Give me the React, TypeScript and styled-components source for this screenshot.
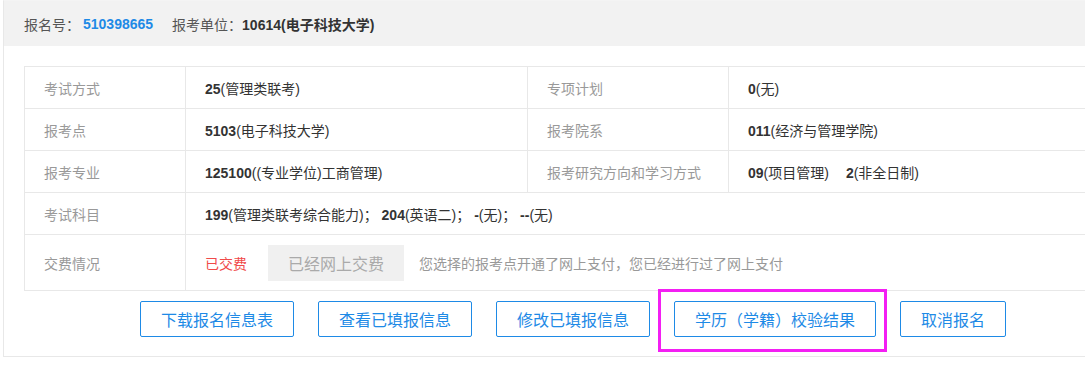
import React from 'react'
import styled, { createGlobalStyle } from 'styled-components'


const actions = [
    { label: '下载报名信息表' },
    { label: '查看已填报信息' },
    { label: '修改已填报信息' },
    { label: '学历（学籍）校验结果', marked: true },
    { label: '取消报名' },
]


export default function App(): JSX.Element {

    const rows: Array<[string, React.ReactNode, string, React.ReactNode]> = [
        ['考试方式', <><b>25</b>(管理类联考)</>, '专项计划', <><b>0</b>(无)</>],
        ['报考点', <><b>5103</b>(电子科技大学)</>, '报考院系', <><b>011</b>(经济与管理学院)</>],
        ['报考专业', <><b>125100</b>((专业学位)工商管理)</>, '报考研究方向和学习方式', <><b>09</b>(项目管理)<Gap /><b>2</b>(非全日制)</>],
    ]

    return (
        <Page>
            <GlobalStyle />
            <Panel>
                <Header>
                    <HeadLabel>报名号：</HeadLabel>
                    <RegNo>510398665</RegNo>
                    <HeadLabel>报考单位：</HeadLabel>
                    <HeadValue>10614(电子科技大学)</HeadValue>
                </Header>
                <Body>
                    <InfoTable>
                        <colgroup>
                            <col style={{ width: 161 }} />
                            <col style={{ width: 342 }} />
                            <col style={{ width: 201 }} />
                            <col style={{ width: 394 }} />
                        </colgroup>
                        <tbody>
                            {rows.map(([l1, v1, l2, v2]) => (
                                <tr key={l1}>
                                    <Label>{l1}</Label>
                                    <Value>{v1}</Value>
                                    <Label>{l2}</Label>
                                    <Value>{v2}</Value>
                                </tr>
                            ))}
                            <tr>
                                <Label>考试科目</Label>
                                <Value colSpan={3}>
                                    <b>199</b>(管理类联考综合能力)； <b>204</b>(英语二)； <b>-</b>(无)； <b>--</b>(无)
                                </Value>
                            </tr>
                            <tr>
                                <Label $tall>交费情况</Label>
                                <Value colSpan={3} $tall>
                                    <PayLine>
                                        <Paid>已交费</Paid>
                                        <PaidButton disabled>已经网上交费</PaidButton>
                                        <Hint>您选择的报考点开通了网上支付，您已经进行过了网上支付</Hint>
                                    </PayLine>
                                </Value>
                            </tr>
                        </tbody>
                    </InfoTable>
                    <Actions>
                        {actions.map(a => a.marked
                            ? <Marked key={a.label}><ActionButton>{a.label}</ActionButton></Marked>
                            : <ActionButton key={a.label}>{a.label}</ActionButton>
                        )}
                    </Actions>
                </Body>
            </Panel>
        </Page>
    )
}


const GlobalStyle = createGlobalStyle`
    html, body {
        margin: 0;
        padding: 0;
        background: #fff;
        overflow: hidden;
    }
    body {
        font-family: "Liberation Sans", Arial, "Noto Sans CJK SC", sans-serif;
        font-size: 14px;
        color: #333;
    }
`

const Page = styled.div`
    width: 100%;
    overflow: hidden;
`

const Panel = styled.div`
    margin-left: 3px;
    width: 1140px;
    border: 1px solid #e8e8e8;
    border-top-color: #f4f4f4;
    background: #fff;
`

const Header = styled.div`
    height: 45px;
    background: #f2f2f2;
    padding: 0 20px;
    display: flex;
    align-items: center;
    font-size: 14px;
`

const HeadLabel = styled.span`
    color: #555;
`

const RegNo = styled.span`
    color: #1e8ae6;
    font-weight: bold;
    margin: 0 19px 0 3px;
`

const HeadValue = styled.span`
    font-weight: bold;
    color: #333;
`

const Body = styled.div`
    padding: 20px 20px 19px 20px;
`

const InfoTable = styled.table`
    width: 1098px;
    table-layout: fixed;
    border-collapse: collapse;

    & b {
        font-weight: bold;
        color: #333;
    }
`

const Cell = styled.td<{ $tall?: boolean }>`
    height: ${p => p.$tall ? 55 : 41}px;
    padding: 0 19px;
    border: 1px solid #e8e8e8;
    white-space: nowrap;
    font-size: 14px;
`

const Label = styled(Cell)`
    color: #999;
`

const Value = styled(Cell)`
    color: #333;
`

const Gap = styled.span`
    display: inline-block;
    width: 17px;
`

const PayLine = styled.div`
    display: flex;
    align-items: center;
`

const Paid = styled.span`
    color: #f04a4a;
    margin-right: 21px;
`

const PaidButton = styled.button`
    height: 36px;
    padding: 0 20px;
    border: none;
    background: #f0f0f0;
    color: #aaa;
    font-family: inherit;
    font-size: 16px;
    margin-right: 15px;
`

const Hint = styled.span`
    color: #999;
`

const Actions = styled.div`
    width: 1098px;
    margin-top: 10px;
    display: flex;
    justify-content: center;
    gap: 24px;
`

const ActionButton = styled.button`
    height: 36px;
    padding: 0 20px;
    border: 1px solid #1e8ae6;
    border-radius: 2px;
    background: #fff;
    color: #1e8ae6;
    font-family: inherit;
    font-size: 16px;
    cursor: pointer;
`

const Marked = styled.div`
    position: relative;
    display: flex;

    &::after {
        content: "";
        position: absolute;
        top: -12px;
        right: -11px;
        bottom: -15px;
        left: -16px;
        border: 3px solid #f31ff3;
        pointer-events: none;
    }
`
